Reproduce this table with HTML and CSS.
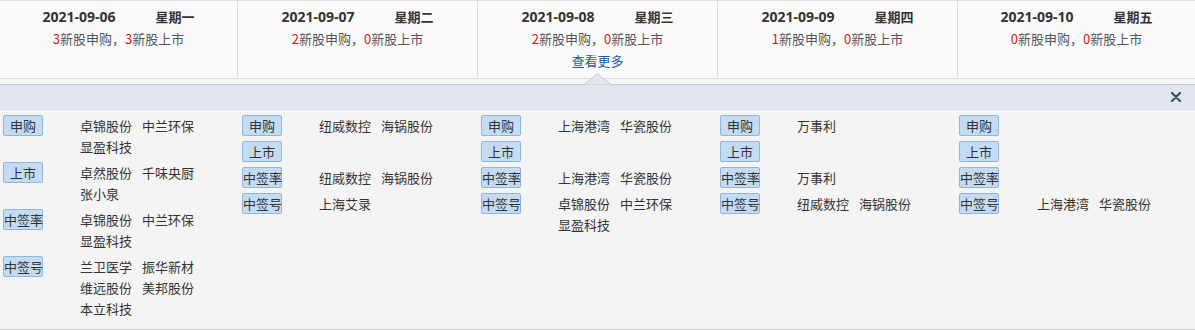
FILE: index.html
```html
<!DOCTYPE html>
<html lang="zh-CN">
<head>
<meta charset="utf-8">
<title>新股日历</title>
<link rel="stylesheet" href="styles.css">
</head>
<body>
<div class="calendar">
  <div class="days">
    <div class="day">
      <div class="day-title"><span class="date">2021-09-06</span><span class="week">星期一</span></div>
      <div class="day-sum"><em>3</em>新股申购<span class="comma">，</span><em>3</em>新股上市</div>
    </div>
    <div class="day">
      <div class="day-title"><span class="date">2021-09-07</span><span class="week">星期二</span></div>
      <div class="day-sum"><em>2</em>新股申购<span class="comma">，</span><em>0</em>新股上市</div>
    </div>
    <div class="day">
      <div class="day-title"><span class="date">2021-09-08</span><span class="week">星期三</span></div>
      <div class="day-sum"><em>2</em>新股申购<span class="comma">，</span><em>0</em>新股上市</div>
      <a class="more" href="#">查看更多</a>
    </div>
    <div class="day">
      <div class="day-title"><span class="date">2021-09-09</span><span class="week">星期四</span></div>
      <div class="day-sum"><em>1</em>新股申购<span class="comma">，</span><em>0</em>新股上市</div>
    </div>
    <div class="day">
      <div class="day-title"><span class="date">2021-09-10</span><span class="week">星期五</span></div>
      <div class="day-sum"><em>0</em>新股申购<span class="comma">，</span><em>0</em>新股上市</div>
    </div>
  </div>

  <div class="panel-bar">
    <svg class="caret" width="29" height="12" viewBox="0 0 29 12"><polygon points="0.5,12 14.5,0.7 28.5,12" fill="#e1e6f1" stroke="#c4c8cf" stroke-width="1"/></svg>
    <svg class="close" width="10" height="10" viewBox="0 0 10 10"><path d="M1 1 L9 9 M9 1 L1 9" stroke="#3e5064" stroke-width="2.2" stroke-linecap="round"/></svg>
  </div>

  <div class="detail">
    <div class="col">
      <div class="row"><span class="tag">申购</span><div class="names"><span>卓锦股份</span><span>中兰环保</span><span>显盈科技</span></div></div>
      <div class="row"><span class="tag">上市</span><div class="names"><span>卓然股份</span><span>千味央厨</span><span>张小泉</span></div></div>
      <div class="row"><span class="tag">中签率</span><div class="names"><span>卓锦股份</span><span>中兰环保</span><span>显盈科技</span></div></div>
      <div class="row"><span class="tag">中签号</span><div class="names"><span>兰卫医学</span><span>振华新材</span><span>维远股份</span><span>美邦股份</span><span>本立科技</span></div></div>
    </div>
    <div class="col">
      <div class="row"><span class="tag">申购</span><div class="names"><span>纽威数控</span><span>海锅股份</span></div></div>
      <div class="row"><span class="tag">上市</span><div class="names"></div></div>
      <div class="row"><span class="tag">中签率</span><div class="names"><span>纽威数控</span><span>海锅股份</span></div></div>
      <div class="row"><span class="tag">中签号</span><div class="names"><span>上海艾录</span></div></div>
    </div>
    <div class="col">
      <div class="row"><span class="tag">申购</span><div class="names"><span>上海港湾</span><span>华瓷股份</span></div></div>
      <div class="row"><span class="tag">上市</span><div class="names"></div></div>
      <div class="row"><span class="tag">中签率</span><div class="names"><span>上海港湾</span><span>华瓷股份</span></div></div>
      <div class="row"><span class="tag">中签号</span><div class="names"><span>卓锦股份</span><span>中兰环保</span><span>显盈科技</span></div></div>
    </div>
    <div class="col">
      <div class="row"><span class="tag">申购</span><div class="names"><span>万事利</span></div></div>
      <div class="row"><span class="tag">上市</span><div class="names"></div></div>
      <div class="row"><span class="tag">中签率</span><div class="names"><span>万事利</span></div></div>
      <div class="row"><span class="tag">中签号</span><div class="names"><span>纽威数控</span><span>海锅股份</span></div></div>
    </div>
    <div class="col">
      <div class="row"><span class="tag">申购</span><div class="names"></div></div>
      <div class="row"><span class="tag">上市</span><div class="names"></div></div>
      <div class="row"><span class="tag">中签率</span><div class="names"></div></div>
      <div class="row"><span class="tag">中签号</span><div class="names wide"><span>上海港湾</span><span>华瓷股份</span></div></div>
    </div>
  </div>
</div>
</body>
</html>
```

FILE: styles.css
```css
* { box-sizing: border-box; }
html, body {
  margin: 0;
  padding: 0;
  background: #f6f6f6;
}
body {
  font-family: "Noto Sans CJK SC", "Noto Sans", sans-serif;
  font-size: 13px;
  color: #333;
  width: 1195px;
}
.calendar {
  width: 1195px;
}
.days {
  display: grid;
  grid-template-columns: 238px 240px 240px 240px 237px;
  background: #fafafa;
  border-top: 1px solid #dcdcdc;
  border-bottom: 1px solid #dcdcdc;
}
.day {
  height: 77px;
  padding-top: 5px;
  text-align: center;
  border-right: 1px solid #dcdcdc;
  display: flex;
  flex-direction: column;
  align-items: center;
}
.day:last-child { border-right: none; }
.day-title {
  line-height: 22px;
  height: 22px;
  font-weight: bold;
  color: #333;
  display: flex;
  gap: 40px;
  justify-content: center;
}
.date {
  font-family: "Noto Sans", "Noto Sans CJK SC", sans-serif;
  font-size: 14px;
}
.week { font-size: 13px; }
.day-sum {
  line-height: 22px;
  height: 22px;
  color: #555;
}
.day-sum em {
  font-style: normal;
  color: #dd1111;
}
.comma {
  font-family: "Noto Sans CJK TC", "Noto Sans CJK SC", sans-serif;
}
.more {
  line-height: 22px;
  color: #1f5aa6;
  text-decoration: none;
}
.panel-bar {
  position: relative;
  margin-top: 5px;
  height: 26px;
  background: #e1e6f1;
  border-top: 1px solid #c4c8cf;
  border-bottom: 1px solid #d6dbe5;
  display: flex;
  align-items: center;
  justify-content: flex-end;
  padding-right: 14px;
}
.caret {
  position: absolute;
  left: 583px;
  top: -12px;
}
.close { display: block; }
.detail {
  display: grid;
  grid-template-columns: repeat(5, 239px);
  padding: 5px 0 5px 3px;
  background: #f4f4f4;
  border-bottom: 1px solid #c8c8c8;
}
.row {
  display: flex;
  align-items: flex-start;
  gap: 37px;
  margin-bottom: 5px;
}
.tag {
  flex: none;
  width: 40px;
  height: 21px;
  line-height: 19px;
  text-align: center;
  white-space: nowrap;
  background: #c3dbf3;
  border: 1px solid #93b5da;
  border-radius: 2px;
  color: #333;
  font-size: 13px;
}
.names {
  display: flex;
  flex-wrap: wrap;
  column-gap: 10px;
  width: 124px;
  line-height: 21px;
  color: #333;
}
.names.wide { margin-left: 1px; }
.names span { white-space: nowrap; }
```
